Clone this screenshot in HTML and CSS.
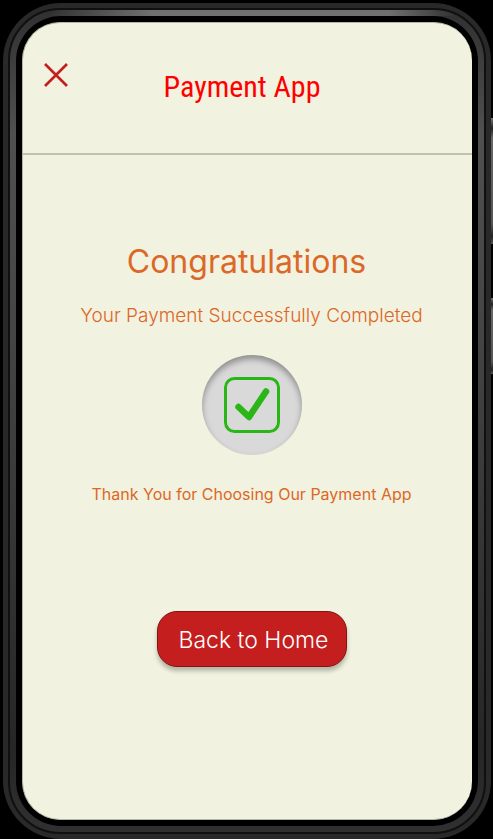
FILE: index.html
```html
<!DOCTYPE html>
<html lang="en">
<head>
<meta charset="utf-8">
<meta name="viewport" content="width=device-width, initial-scale=1">
<title>Payment App</title>
<link rel="stylesheet" href="styles.css">
</head>
<body>
<div class="phone">
  <span class="side-key side-key-power"></span>
  <span class="side-key side-key-volume"></span>
  <div class="metal">
    <div class="bezel">
      <div class="screen">
        <header class="top-bar">
          <button class="close" type="button" aria-label="Close">
            <svg viewBox="0 0 24 24" width="24" height="24" fill="none" stroke="#c41e1e" stroke-width="2.6"><path d="M1 1L23 23M23 1L1 23"/></svg>
          </button>
          <h1 class="app-name">Payment App</h1>
        </header>
        <main class="content">
          <h2 class="headline">Congratulations</h2>
          <p class="message">Your Payment Successfully Completed</p>
          <div class="badge">
            <svg viewBox="0 0 56 56" width="56" height="56" fill="none" stroke="#2bb617"><rect x="1.5" y="1.5" width="53" height="53" rx="9" stroke-width="3"/><path d="M14.500 30L25 40L42 14.500" stroke-width="6.500" stroke-linecap="round" stroke-linejoin="round"/></svg>
          </div>
          <p class="thanks">Thank You for Choosing Our Payment App</p>
          <button class="home" type="button">Back to Home</button>
        </main>
      </div>
    </div>
  </div>
</div>
</body>
</html>
```
FILE: styles.css
```css
* {
  box-sizing: border-box;
}

body {
  margin: 0;
  background: #000;
  font-family: Inter, "Liberation Sans", sans-serif;
  color: #dc6827;
}

h1, h2, p {
  margin: 0;
  font-weight: 400;
}

.phone {
  position: relative;
  display: flex;
  min-height: calc(100vh - 3px);
  margin: 3px 2px 0 3px;
  padding: 5px;
  border-radius: 58px;
  background: #292929;
}

.metal {
  display: flex;
  flex: 1;
  padding: 6px;
  border: 2px solid #101010;
  border-radius: 52px;
  background:
    linear-gradient(90deg, transparent 8%, #707070 30%, #707070 80%, transparent 94%) top / 100% 6px no-repeat,
    linear-gradient(#303030, #505050 15%, #444 40%, #262626 90%, #303030);
}

.bezel {
  display: flex;
  flex: 1;
  padding: 6px;
  border-radius: 45px;
  background: #000;
}

.screen {
  flex: 1;
  border: 1px solid #b4b5a7;
  border-width: 1px 0 1px 1px;
  border-radius: 38px;
  background: #f1f2df;
}

.side-key {
  position: absolute;
  left: 100%;
  width: 2px;
  background: linear-gradient(#777, #222 8%, #666 16%, #555 84%, #222 94%, #555);
}

.side-key-power {
  top: 115px;
  height: 126px;
}

.side-key-volume {
  top: 295px;
  height: 76px;
}

.top-bar {
  display: grid;
  grid-template-columns: 1fr auto 1fr;
  padding: 40px 21px 46px;
  border-bottom: 2px solid #c1c2b2;
}

.close {
  justify-self: start;
  align-self: start;
  padding: 0;
  border: 0;
  background: none;
  cursor: pointer;
}

.close svg {
  display: block;
}

.app-name {
  padding: 4px 11px 0 0;
  font: 30px/40px "Roboto Condensed", Roboto, sans-serif;
  color: #f00;
}

.content {
  display: flex;
  flex-direction: column;
  align-items: center;
  padding: 87px 0 80px 8px;
}

.headline {
  margin-right: 10px;
  font-size: 32px;
  line-height: 40px;
}

.message {
  margin-top: 22px;
  font-size: 19px;
  font-weight: 350;
  line-height: 24px;
}

.badge {
  display: grid;
  place-items: center;
  width: 100px;
  height: 100px;
  margin-top: 27px;
  border-radius: 50%;
  background: #d9d9d9;
  box-shadow: inset 0 4px 6px rgba(0, 0, 0, 0.35);
}

.thanks {
  margin-top: 27px;
  font-size: 16px;
  line-height: 24px;
}

.home {
  width: 190px;
  height: 56px;
  margin-top: 105px;
  padding: 2px 0 0 4px;
  border: 1px solid #841313;
  border-radius: 20px;
  background: #c41e1e;
  box-shadow: 0 4px 4px rgba(0, 0, 0, 0.25);
  font: inherit;
  font-size: 23px;
  font-weight: 350;
  color: #fff;
  cursor: pointer;
}
```
